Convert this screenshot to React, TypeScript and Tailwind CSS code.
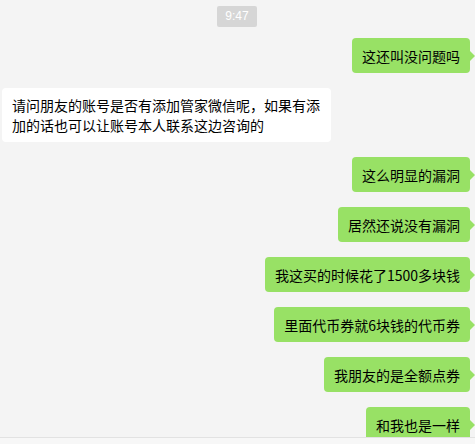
const font = { fontFamily: '"SimSun", "Noto Sans CJK SC", "Liberation Sans", sans-serif' };

const mine = [
  "这还叫没问题吗",
];

const later = [
  "这么明显的漏洞",
  "居然还说没有漏洞",
  "我这买的时候花了1500多块钱",
  "里面代币券就6块钱的代币券",
  "我朋友的是全额点券",
  "和我也是一样",
];

const RightBubble = ({ text }: { text: string }) => (
  <div className="flex justify-end pr-[5px]">
    <div className="relative rounded-[4px] bg-[#98e165] px-[10px] py-[7.5px] text-[14px] leading-[20px] text-black">
      {text}
      <span className="absolute right-[-5px] top-[13px] h-0 w-0 border-y-[5px] border-l-[5px] border-y-transparent border-l-[#98e165]" />
    </div>
  </div>
);

export default function App() {
  return (
    <div className="relative h-[444px] w-[475px] overflow-hidden bg-[#f4f4f4]" style={font}>
      <div className="flex flex-col pt-[6px]">
        <div className="flex justify-center pr-[1px]">
          <span className="rounded-[2px] bg-[#d6d6d6] px-[8px] py-[3px] text-[12px] leading-[15px] text-white" style={{ fontFamily: '"Liberation Sans", sans-serif' }}>
            9:47
          </span>
        </div>
        <div className="mt-[11px] flex flex-col gap-[15px]">
          {mine.map((t) => (
            <RightBubble key={t} text={t} />
          ))}
          <div className="flex justify-start pl-[2px]">
            <div className="max-w-[329px] rounded-[4px] bg-white px-[10px] py-[7px] text-[14px] leading-[20px] text-black">
              请问朋友的账号是否有添加管家微信呢，如果有添加的话也可以让账号本人联系这边咨询的
            </div>
          </div>
          {later.map((t) => (
            <RightBubble key={t} text={t} />
          ))}
        </div>
      </div>
      <div className="absolute bottom-0 left-0 right-0 h-[7px] border-t border-[#e2e2e2] bg-[#f7f7f7]" />
    </div>
  );
}
